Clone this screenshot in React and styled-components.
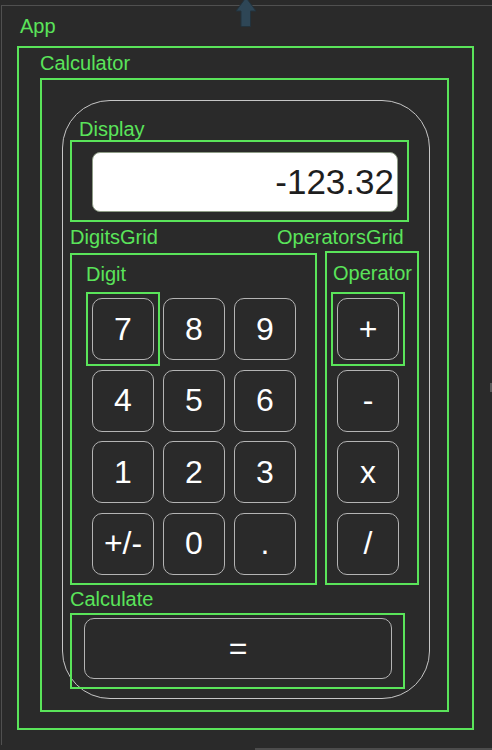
import React from 'react'
import styled, { createGlobalStyle } from 'styled-components'

const green = '#5ae45a'

const GlobalStyle = createGlobalStyle`
  html, body {
    margin: 0;
    padding: 0;
    background: #2a2a2a;
  }
  body {
    font-family: "Liberation Sans", Arial, sans-serif;
  }
  * {
    box-sizing: border-box;
  }
`

const Page = styled.div`
  position: relative;
  width: 492px;
  height: 750px;
  overflow: hidden;
  padding-top: 5px;
`

const Frame = styled.div`
  margin-left: 1px;
  height: 740px;
  border-top: 1px solid #505050;
  border-left: 1px solid #505050;
  padding-top: 9px;
`

const BottomEdge = styled.div`
  margin-top: 3px;
  margin-left: 255px;
  height: 2px;
  background: #4c4c4c;
`

const Handle = styled.div`
  position: absolute;
  left: 490px;
  top: 383px;
  width: 2px;
  height: 9px;
  background: #5a5a5a;
`

const Arrow = styled.svg`
  position: absolute;
  left: 235px;
  top: -3px;
`

const Label = styled.div`
  color: ${green};
  font-size: 20px;
  line-height: 23px;
  height: 23px;
  white-space: nowrap;
  margin-left: ${p => p.$left || 0}px;
  margin-top: ${p => p.$top || 0}px;
`

const Box = styled.div`
  border: 2px solid ${green};
`

const AppBox = styled(Box)`
  width: 457px;
  height: 684px;
  margin: 8px 0 0 15px;
  padding: 4px 0 0 21px;
`

const CalculatorBox = styled(Box)`
  width: 409px;
  height: 634px;
  margin-top: 3px;
  padding: 20px 0 0 20px;
`

const Body = styled.div`
  width: 368px;
  height: 599px;
  border: 1px solid #c6c6c6;
  border-radius: 48px;
  padding: 17px 0 0 7px;
`

const DisplayBox = styled(Box)`
  width: 339px;
  height: 82px;
  margin-top: -1px;
  padding: 10px 0 0 20px;
`

const Screen = styled.div`
  width: 306px;
  height: 60px;
  background: #fff;
  border: 1px solid #8e9c86;
  border-radius: 8px;
  display: flex;
  align-items: center;
  justify-content: flex-end;
  padding-right: 3px;
  font-size: 35px;
  color: #1e1e1e;
`

const GridLabels = styled.div`
  display: grid;
  grid-template-columns: 207px auto;
  margin-top: 4px;
`

const Grids = styled.div`
  display: flex;
  align-items: flex-end;
  gap: 8px;
  height: 336px;
`

const DigitsBox = styled(Box)`
  width: 247px;
  height: 332px;
  padding: 8px 0 0 14px;
`

const OperatorsBox = styled(Box)`
  width: 94px;
  height: 334px;
  padding: 9px 0 0 6px;
`

const KeyGrid = styled.div`
  display: grid;
  grid-template-columns: repeat(3, 62px);
  column-gap: 9px;
  row-gap: 9.5px;
  margin: 12px 0 0 6px;
`

const KeyColumn = styled.div`
  display: flex;
  flex-direction: column;
  align-items: flex-start;
  gap: 9.5px;
  margin: 13px 0 0 4px;
`

const Highlight = styled.div`
  display: flex;
  outline: 2px solid ${green};
  outline-offset: 4px;
`

const Key = styled.button`
  width: 62px;
  height: 62px;
  padding: 0;
  display: flex;
  align-items: center;
  justify-content: center;
  background: #2a2a2a;
  color: #fff;
  border: 1px solid #b4b4b4;
  border-radius: 10px;
  font-family: "Liberation Sans", Arial, sans-serif;
  font-size: 32px;
  cursor: pointer;
`

const CalculateBox = styled(Box)`
  width: 335px;
  height: 76px;
  margin-top: 2px;
  padding: 3px 0 0 12px;
`

const EqualsKey = styled(Key)`
  width: 308px;
  height: 61px;
`

const digits = ['7', '8', '9', '4', '5', '6', '1', '2', '3', '+/-', '0', '.']
const operators = ['+', '-', 'x', '/']

export default function App() {
  return (
    <>
      <GlobalStyle />
      <Page>
        <Frame>
          <Label $left={18}>App</Label>
          <AppBox>
            <Label>Calculator</Label>
            <CalculatorBox>
              <Body>
                <Label $left={9}>Display</Label>
                <DisplayBox>
                  <Screen>-123.32</Screen>
                </DisplayBox>
                <GridLabels>
                  <Label>DigitsGrid</Label>
                  <Label>OperatorsGrid</Label>
                </GridLabels>
                <Grids>
                  <DigitsBox>
                    <Label>Digit</Label>
                    <KeyGrid>
                      {digits.map((d, i) =>
                        i === 0 ? (
                          <Highlight key={d}>
                            <Key>{d}</Key>
                          </Highlight>
                        ) : (
                          <Key key={d}>{d}</Key>
                        )
                      )}
                    </KeyGrid>
                  </DigitsBox>
                  <OperatorsBox>
                    <Label>Operator</Label>
                    <KeyColumn>
                      {operators.map((o, i) =>
                        i === 0 ? (
                          <Highlight key={o}>
                            <Key>{o}</Key>
                          </Highlight>
                        ) : (
                          <Key key={o}>{o}</Key>
                        )
                      )}
                    </KeyColumn>
                  </OperatorsBox>
                </Grids>
                <Label $top={3}>Calculate</Label>
                <CalculateBox>
                  <EqualsKey>=</EqualsKey>
                </CalculateBox>
              </Body>
            </CalculatorBox>
          </AppBox>
        </Frame>
        <BottomEdge />
        <Handle />
        <Arrow width="22" height="30" viewBox="0 0 22 30">
          <path d="M11 0.5 L21 14 L15.5 14 L15.5 29.5 L6 29.5 L6 14 L1 14 Z" fill="#2e4656" stroke="#22323c" strokeWidth="1" />
        </Arrow>
      </Page>
    </>
  )
}
